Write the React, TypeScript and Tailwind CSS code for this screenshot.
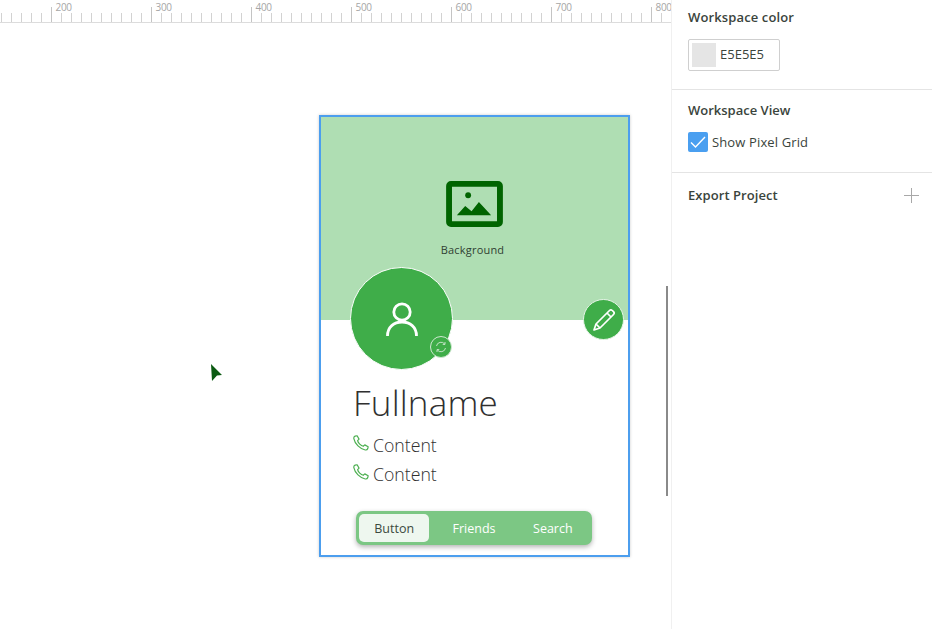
import React from "react";

const ticks = Array.from({ length: 67 }, (_, i) => i * 10 + 1.5);
const labels = [200, 300, 400, 500, 600, 700, 800];

function Ruler() {
  return (
    <svg width="671" height="24" className="block shrink-0">
      <line x1="0" x2="671" y1="22.5" y2="22.5" stroke="#dcdcdc" />
      {ticks.map((x, i) => (
        <line key={x} x1={x} x2={x} y1={i % 10 === 5 ? 7 : 13} y2="22" stroke={i % 10 === 5 ? "#c4c4c4" : "#d2d2d2"} />
      ))}
      {labels.map((l, i) => (
        <text key={l} x={55.5 + i * 100} y="11" fontSize="10" letterSpacing="-0.3" fill="#a6a6a6" fontFamily="Open Sans, sans-serif">
          {l}
        </text>
      ))}
    </svg>
  );
}

function Phone() {
  return (
    <svg width="16" height="16" viewBox="0 0 17 17" fill="none" stroke="#4caf50" strokeWidth="1.25" strokeLinejoin="round" className="mt-[3px] shrink-0">
      <path d="M2.2 1.2 4.4 .8 6.4 4.4 4.9 5.9C5.4 8.4 8.4 11.4 10.9 12l1.6-1.5 3.6 2-.5 2.2c-.4 1-1.5 1.4-2.6 1.2C7.5 14.900 2 9.500.9 3.800.7 2.700 1.200 1.600 2.200 1.200Z" />
    </svg>
  );
}

function Tab({ label, active, className }: { label: string; active?: boolean; className?: string }) {
  return (
    <div className={(active ? "h-[28px] rounded-[5px] bg-[#eef7ef] text-[#3c4a3e]" : "h-[28px] text-white") + " flex items-center justify-center pt-[2px] " + (className ?? "")}>
      {label}
    </div>
  );
}

export default function App() {
  return (
    <div className="relative flex h-[629px] w-[932px] overflow-hidden bg-white font-['Open_Sans',sans-serif]">
      <div className="relative w-[671px] shrink-0">
        <Ruler />
        <div className="pl-[319px] pt-[91px]">
          <div className="relative h-[442px] w-[311px] border-2 border-[#4c9eee] bg-white shadow-[0_0_3px_rgba(0,0,0,0.2)]">
            <div className="flex h-[203px] flex-col items-center bg-[#afdeb3] pt-[64px]">
              <svg width="57" height="46" viewBox="0 0 58 47" fill="#006400">
                <path fillRule="evenodd" d="M5 0h48a5 5 0 0 1 5 5v37a5 5 0 0 1-5 5H5a5 5 0 0 1-5-5V5a5 5 0 0 1 5-5Zm1 6v35h46V6Z" />
                <circle cx="22.500" cy="14.500" r="3" />
                <path d="M11 35 19.500 25.500 26 31 33.500 21.500 46 35Z" />
              </svg>
              <div className="mt-[15px] pr-[4px] text-[11px] leading-[16px] tracking-[0.2px] text-[#2f3f32]">Background</div>
            </div>

            <div className="absolute left-[29px] top-[150px] flex h-[103px] w-[103px] items-center justify-center rounded-full border border-white bg-[#3fad49]">
              <svg width="32" height="36" viewBox="0 0 32 36" fill="none" stroke="white" strokeWidth="2.800" className="mt-[2px]">
                <circle cx="16" cy="10" r="8.200" />
                <path d="M1.500 34C1.500 25 8 20 16 20s14.500 5 14.500 14" />
              </svg>
              <div className="absolute left-[79px] top-[68px] flex h-[22px] w-[22px] items-center justify-center rounded-full border border-[#cfe8d1] bg-[#3fad49]">
                <svg width="12" height="12" viewBox="0 0 12 12" fill="none" stroke="#cfe8d1" strokeWidth="0.900">
                  <path d="M1.500 5A4.600 4.600 0 0 1 9.800 3.200M10.500 7A4.600 4.600 0 0 1 2.200 8.800" />
                  <path d="M10 1v2.400H7.700M2 11V8.600h2.300" />
                </svg>
              </div>
            </div>

            <div className="absolute left-[262px] top-[182px] flex h-[41px] w-[41px] items-center justify-center rounded-full border border-[#e6f4e7] bg-[#3fad49]">
              <svg width="24" height="24" viewBox="0 0 24 24" fill="none" stroke="white" strokeWidth="1.700" strokeLinejoin="round">
                <path d="M17.500 2.500a2 2 0 0 1 2.800 0l1.200 1.200a2 2 0 0 1 0 2.800L8 20l-6 2 2-6Z" />
                <path d="M15 5l4 4M4 16l4 4" />
              </svg>
            </div>

            <div className="pl-[32px] pt-[58px]">
              <div className="text-[35px] font-light leading-[50px] tracking-[0.2px] text-[#303030]">Fullname</div>
              <div className="mt-[4px] flex h-[29px] items-start">
                <Phone />
                <span className="ml-[4px] text-[17.700px] font-light leading-[27px] text-[#303030]">Content</span>
              </div>
              <div className="flex h-[29px] items-start">
                <Phone />
                <span className="ml-[4px] text-[17.700px] font-light leading-[27px] text-[#303030]">Content</span>
              </div>
            </div>

            <div className="absolute left-[35px] top-[394px] flex h-[34px] w-[236px] items-center rounded-[7px] bg-[#7cc784] pl-[3px] text-[12.500px] shadow-[0_2px_5px_rgba(0,0,0,0.3)]">
              <Tab label="Button" active className="w-[71px]" />
              <Tab label="Friends" className="ml-[5px] w-[80px]" />
              <Tab label="Search" className="w-[79px]" />
            </div>
          </div>
        </div>
        <div className="absolute left-[666px] top-[286px] h-[210px] w-[2px] bg-[#8a8a8a]" />
        <svg width="12" height="18" viewBox="0 0 12 18" className="absolute left-[211px] top-[364px]">
          <path d="M0 0 11 11 6 11.500 1 17Z" fill="#0b5a12" />
        </svg>
      </div>

      <div className="w-[261px] border-l border-[#f0f0f0] text-[#3a443c]">
        <div className="h-[90px] border-b border-[#e4e4e4] px-[16px] pt-[8px]">
          <div className="text-[13px] font-semibold leading-[19px] tracking-[0.13px]">Workspace color</div>
          <div className="mt-[12px] flex h-[32px] w-[92px] items-center rounded-[2px] border border-[#cfcfcf] pl-[3px]">
            <div className="h-[24px] w-[24px] bg-[#e5e5e5]" />
            <span className="ml-[4px] text-[13px]">E5E5E5</span>
          </div>
        </div>
        <div className="h-[83px] border-b border-[#e4e4e4] px-[16px] pt-[11px]">
          <div className="text-[13px] font-semibold leading-[19px]">Workspace View</div>
          <div className="mt-[12px] flex items-center">
            <div className="flex h-[20px] w-[20px] items-center justify-center rounded-[2px] bg-[#4a9ff0]">
              <svg width="16" height="12" viewBox="0 0 16 12" fill="none" stroke="white" strokeWidth="1.400">
                <path d="M1 6.500 5.500 11 15 1" />
              </svg>
            </div>
            <span className="ml-[4px] text-[13px] leading-[20px] tracking-[0.13px]">Show Pixel Grid</span>
          </div>
        </div>
        <div className="flex items-center justify-between pl-[16px] pr-[13px] pt-[13px]">
          <div className="text-[13px] font-semibold leading-[19px] tracking-[0.07px]">Export Project</div>
          <svg width="15" height="15" viewBox="0 0 15 15" stroke="#a8a8a8">
            <path d="M7.500 0v15M0 7.500h15" />
          </svg>
        </div>
      </div>
    </div>
  );
}
